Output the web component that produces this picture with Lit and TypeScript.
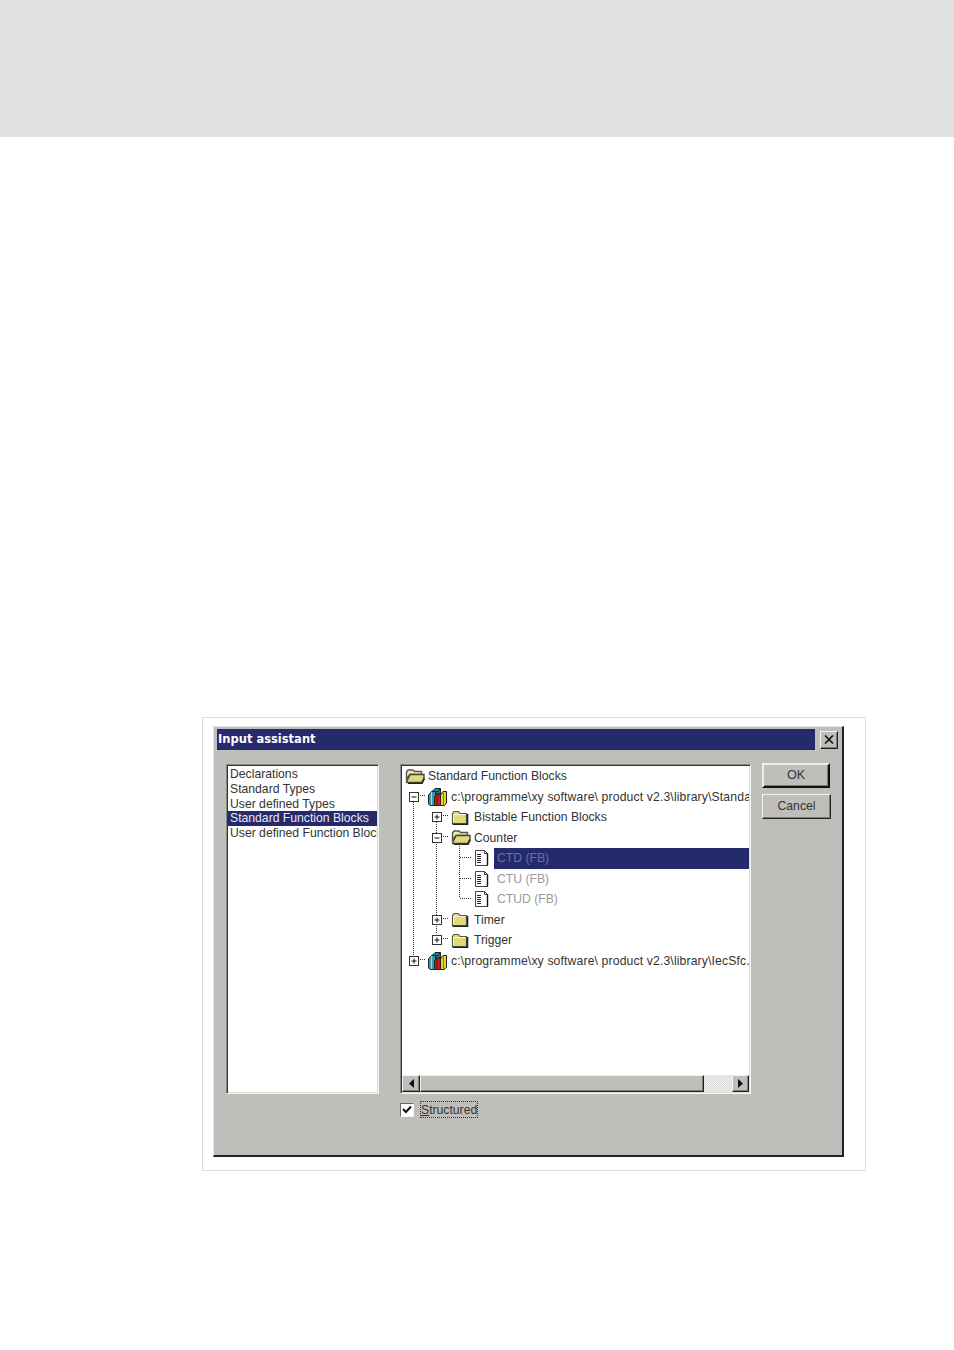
import { LitElement, html, css, svg } from "lit";
import { customElement } from "lit/decorators.js";

const folderClosed = html`<svg class="ic folder" width="18" height="15" viewBox="0 0 18 15"><path d="M1.5 3.5 L3 1.5 H7.5 L9 3.5 H15.5 V13.5 H1.5 Z" fill="#e0db78" stroke="#555550" stroke-width="1.2"/><path d="M2.5 4.5 H14.5 M2.5 4.5 V12" stroke="#fbf9d8" fill="none"/><path d="M16.5 4 V14.5 H1.5" stroke="#222" stroke-width="1.6" fill="none"/></svg>`;
const folderOpen = html`<svg class="ic folder open" width="20" height="15" viewBox="0 0 20 15"><path d="M1.5 3 L3 1 H8 L9.5 2.5 H16.5 V5.5 H5 L1.5 10 Z" fill="#f2eeb0" stroke="#55554f" stroke-width="1.4"/><path d="M1.5 13 L5 5.5 H19 V9 L16.5 13.5 H2 Z" fill="#e0db78" stroke="#444440" stroke-width="1.4"/><path d="M3 14.5 H17 L19.5 9.5" stroke="#222" stroke-width="1.4" fill="none"/></svg>`;
const books = html`<svg class="ic books" width="21" height="20" viewBox="0 0 21 20"><path d="M1.5 8 L4.5 4.5 H8.5 V18.5 H3 L1.5 17 Z" fill="#3a9aa8" stroke="#222"/><path d="M4.5 5 V18" stroke="#9adfe4"/><path d="M5 4.5 L8 1.5 H13.5 L11 4.5 Z" fill="#1f8e9c" stroke="#222"/><path d="M8.5 4.5 H11 L13.5 1.5 V7 H8.5 Z" fill="#0c7a8a" stroke="#222"/><path d="M7.5 9.5 L10 7 H13.5 V18.5 H7.5 Z" fill="#c81818" stroke="#222"/><path d="M10 7.5 V18" stroke="#701010"/><path d="M13.5 8 L16 4.5 H19.5 V16 L17.5 18.5 H13.5 Z" fill="#e6d820" stroke="#222"/><path d="M16.5 5.5 V18" stroke="#8a8010"/></svg>`;
const doc = html`<svg class="ic doc" width="15" height="18" viewBox="0 0 15 18"><path d="M1.5 1.5 H10.5 L13.5 4.5 V16.5 H1.5 Z" fill="#fff" stroke="#444"/><path d="M10.5 1.5 V4.5 H13.5" fill="none" stroke="#444"/><path d="M13.5 4.5 V16.5" stroke="#111" stroke-width="1.4"/><path d="M3 5.5 H7 M3 7.5 H7 M3 9.5 H7 M3 11.5 H7 M3 13.5 H7" stroke="#222"/></svg>`;

const box = (open: boolean) =>
  html`<svg class="box" width="10" height="10" viewBox="0 0 10 10"><rect x=".5" y=".5" width="9" height="9" fill="#fff" stroke="#333"/><path d="M2.5 5 H7.5${open ? "" : " M5 2.5 V7.5"}" stroke="#111"/></svg>`;

type Row = { cls: string; exp?: boolean; icon: unknown; text: string; sel?: boolean; dim?: boolean };
const P = "c:\\programme\\xy software\\ product v2.3\\library\\";
const rows: Row[] = [
  { cls: "l0", icon: folderOpen, text: "Standard Function Blocks" },
  { cls: "l1", exp: true, icon: books, text: P + "Standard.lib" },
  { cls: "l2", exp: false, icon: folderClosed, text: "Bistable Function Blocks" },
  { cls: "l2", exp: true, icon: folderOpen, text: "Counter" },
  { cls: "l3", icon: doc, text: "CTD (FB)", sel: true, dim: true },
  { cls: "l3", icon: doc, text: "CTU (FB)", dim: true },
  { cls: "l3", icon: doc, text: "CTUD (FB)", dim: true },
  { cls: "l2", exp: false, icon: folderClosed, text: "Timer" },
  { cls: "l2", exp: false, icon: folderClosed, text: "Trigger" },
  { cls: "l1", exp: false, icon: books, text: P + "IecSfc.lib" },
];
const list = ["Declarations", "Standard Types", "User defined Types", "Standard Function Blocks", "User defined Function Blocks"];

// Connector lines, in tree-body coordinates (origin at page 402,766)
const lines = svg`<g stroke="#333" stroke-dasharray="1 1" fill="none" shape-rendering="crispEdges">
  <path d="M11.5 34 V190"/><path d="M16 29.5 H24"/><path d="M16 193.5 H24"/>
  <path d="M34.5 54 V168"/>
  <path d="M39 49.5 H47 M39 70.5 H47 M39 152.5 H47 M39 172.5 H47"/>
  <path d="M57.5 76 V132"/>
  <path d="M58 91.5 H70 M58 112.5 H70 M58 132.5 H70"/>
</g>`;

@customElement("app-root")
export class AppRoot extends LitElement {
  static styles = css`
    :host { display: block; width: 954px; height: 1350px; background: #fff; overflow: hidden;
      font-family: "Liberation Sans", Arial, sans-serif; font-size: 12.2px; color: #333; }
    .band { height: 137px; background: #e0e0e0; }
    .frame { box-sizing: border-box; width: 664px; height: 454px; margin: 580px 0 0 202px;
      border: 1px solid #dcdcdc; padding: 8px 0 0 10px; }
    .dialog { box-sizing: border-box; width: 631px; height: 431px; background: #bfbebb;
      border-style: solid; border-width: 1px 2px 2px 1px; border-color: #e4e4e2 #222 #222 #e4e4e2;
      padding: 2px 0 0 3px; }
    .titlerow { display: flex; align-items: center; gap: 5px; height: 21px; }
    .title { box-sizing: border-box; width: 598px; height: 21px; background: #252a6c; color: #fff;
      font: bold 11.5px/21px "DejaVu Sans", sans-serif; padding-left: 1px; }
    .close { box-sizing: border-box; width: 18px; height: 18px; display: flex; align-items: center; justify-content: center; }
    .raised { background: #bfbebb; border: 1px solid; border-color: #f2f2f0 #222 #222 #f2f2f0;
      box-shadow: inset -1px -1px 0 #7c7c7a; }
    .body { display: flex; margin: 14px 0 0 9px; }
    .sunken { box-sizing: border-box; height: 330px; background: #fff; border: 1px solid;
      border-color: #8a8a88 #f4f4f2 #f4f4f2 #8a8a88; box-shadow: inset 1px 1px 0 #333, inset -1px -1px 0 #dcdcda; padding: 1px; }
    .listbox { width: 153px; margin-right: 21px; line-height: 14.8px; padding-top: 2px; }
    .listbox div { padding-left: 2px; height: 14.8px; white-space: nowrap; overflow: hidden; }
    .listbox .sel { background: #252a6c; color: #e8e8f0; }
    .mid { width: 351px; margin-right: 11px; }
    .tree { display: flex; flex-direction: column; }
    .treebody { position: relative; flex: 1; overflow: hidden; }
    .treelines { position: absolute; left: 0; top: 0; width: 100%; height: 100%; }
    .row { position: relative; display: flex; align-items: center; height: 20.5px; white-space: nowrap; }
    .box { flex: none; }
    .ic { flex: none; }
    .label { padding: 0 3px; min-width: 0; }
    .l0 { padding-left: 3px; }
    .l1 { padding-left: 7px; }
    .l1 .box { margin-right: 8px; }
    .l1 .label { letter-spacing: 0.14px; }
    .l2 { padding-left: 30px; }
    .l2 .box { margin-right: 9px; }
    .l2 .label { margin-left: 2px; }
    .l2 .open { margin-right: -2px; }
    .l3 { padding-left: 72px; }
    .l3 .label { margin-left: 5px; }
    .dim { color: #9a9a9a; }
    .sel-row { flex: 1; align-self: stretch; line-height: 20.5px; background: #252a6c; color: #6d7199; }
    .scroll { display: flex; height: 17px; margin-top: -1px; flex: none; }
    .sb { box-sizing: border-box; display: flex; align-items: center; justify-content: center; }
    .arrow { width: 18px; }
    .arrow.r { width: 17px; }
    .thumb { flex: 1; }
    .track { width: 28px; background: repeating-conic-gradient(#d8d8d6 0 25%, #f2f2f0 0 50%) 0 0 / 2px 2px; }
    .btns { display: flex; flex-direction: column; width: 69px; }
    .btn { box-sizing: border-box; display: flex; align-items: center; justify-content: center; height: 25px; padding-bottom: 1px; }
    .ok { width: 68px; margin: -1px 0 6px; border-width: 2px; border-color: #eee #111 #111 #eee; font-size: 12.6px; }
    .check { display: flex; align-items: center; gap: 6px; margin-top: 6px; height: 19px; }
    .cb { width: 14px; height: 14px; box-sizing: border-box; background: #fff; border: 1px solid;
      border-color: #666 #f4f4f2 #f4f4f2 #666; display: flex; align-items: center; justify-content: center; }
    .focus { border: 1px dotted #333; line-height: 17px; height: 17px; width: 58px; box-sizing: border-box; white-space: nowrap; }
    u { text-decoration: underline; }
  `;

  render() {
    return html`
      <div class="band"></div>
      <div class="frame">
        <div class="dialog">
          <div class="titlerow">
            <div class="title">Input assistant</div>
            <div class="close raised"><svg width="10" height="9" viewBox="0 0 10 9"><path d="M1 0.5 L9 8.5 M9 0.5 L1 8.5" stroke="#111" stroke-width="1.6"/></svg></div>
          </div>
          <div class="body">
            <div class="sunken listbox">
              ${list.map((t, i) => html`<div class=${i === 3 ? "sel" : ""}>${t}</div>`)}
            </div>
            <div class="mid">
              <div class="sunken tree">
                <div class="treebody">
                  <svg class="treelines">${lines}</svg>
                  ${rows.map((r) => html`
                    <div class="row ${r.cls}">
                      ${r.exp === undefined ? "" : box(r.exp)}
                      ${r.icon}
                      <span class="label ${r.dim ? "dim" : ""} ${r.sel ? "sel-row" : ""}">${r.text}</span>
                    </div>`)}
                </div>
                <div class="scroll">
                  <div class="sb arrow raised"><svg width="5" height="9" viewBox="0 0 5 9"><path d="M5 0 L0 4.5 L5 9 Z" fill="#111"/></svg></div>
                  <div class="sb thumb raised"></div>
                  <div class="sb track"></div>
                  <div class="sb arrow r raised"><svg width="5" height="9" viewBox="0 0 5 9"><path d="M0 0 L5 4.5 L0 9 Z" fill="#111"/></svg></div>
                </div>
              </div>
              <div class="check">
                <div class="cb"><svg width="10" height="9" viewBox="0 0 10 9"><path d="M1 4 L4 7 L9 1.5" fill="none" stroke="#111" stroke-width="2"/></svg></div>
                <div class="focus"><u>S</u>tructured</div>
              </div>
            </div>
            <div class="btns">
              <div class="btn raised ok">OK</div>
              <div class="btn raised">Cancel</div>
            </div>
          </div>
        </div>
      </div>
    `;
  }
}
